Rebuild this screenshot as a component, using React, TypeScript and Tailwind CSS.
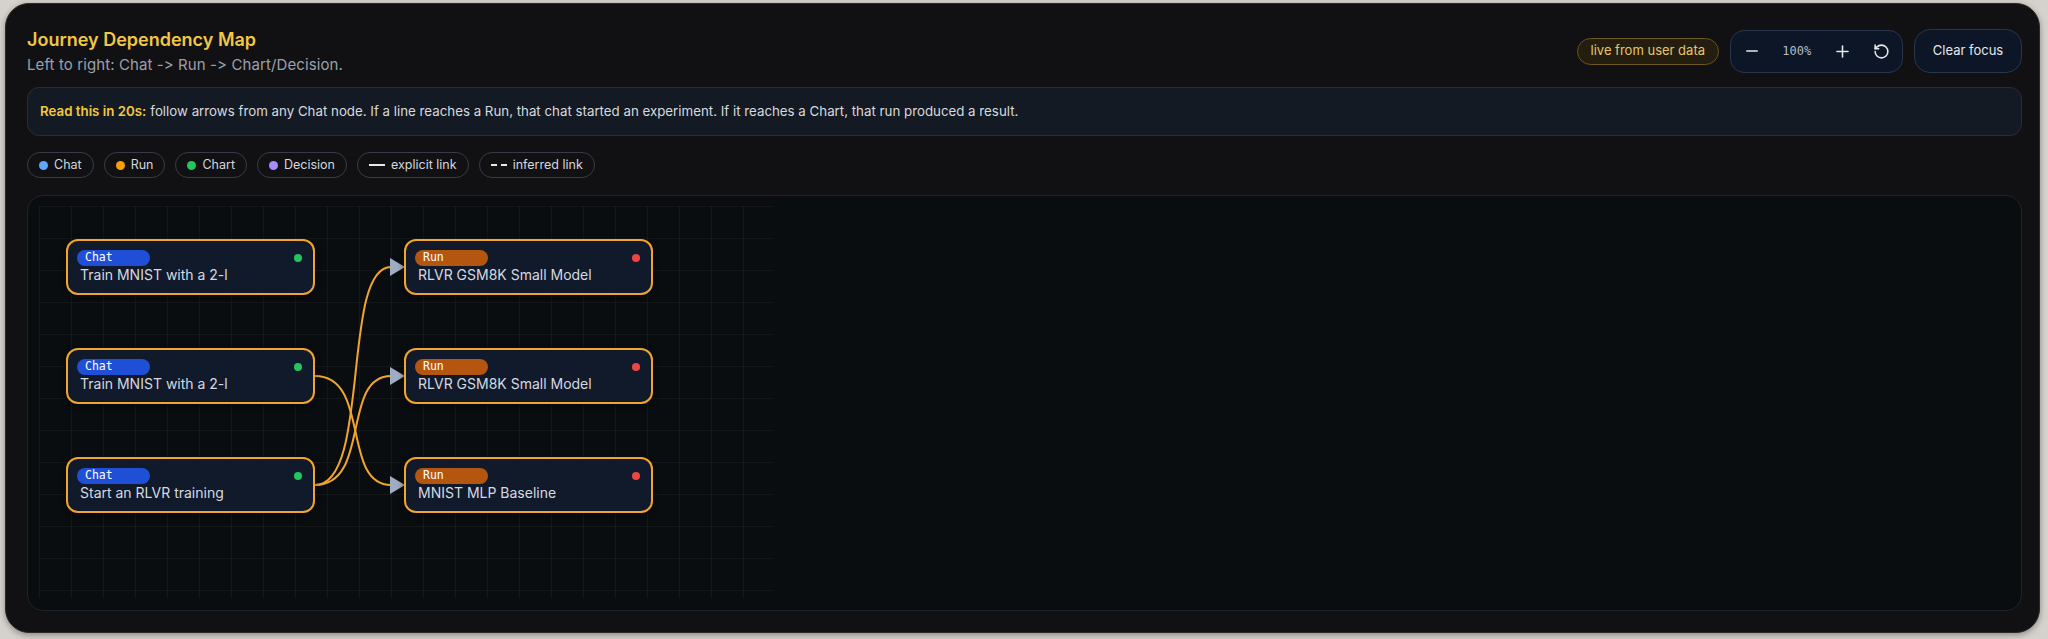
import React from 'react';
import { Minus, Plus, RotateCcw } from 'lucide-react';

const nodes = [
  { id: 'c1', kind: 'Chat', title: 'Train MNIST with a 2-l', x: 38, y: 43 },
  { id: 'c2', kind: 'Chat', title: 'Train MNIST with a 2-l', x: 38, y: 152 },
  { id: 'c3', kind: 'Chat', title: 'Start an RLVR training', x: 38, y: 261 },
  { id: 'r1', kind: 'Run', title: 'RLVR GSM8K Small Model', x: 376, y: 43 },
  { id: 'r2', kind: 'Run', title: 'RLVR GSM8K Small Model', x: 376, y: 152 },
  { id: 'r3', kind: 'Run', title: 'MNIST MLP Baseline', x: 376, y: 261 },
];

// source y -> target y, all from chat column right edge to run column left edge
const edges = [
  { from: 180, to: 289 },
  { from: 289, to: 71 },
  { from: 289, to: 180 },
];

const Legend = ({ children }: any) => (
  <div className="h-[26px] px-[11px] rounded-full border border-[#363b46] flex items-center gap-[6px] text-[12.5px] text-[#d4d7dd]">
    {children}
  </div>
);

const Node = ({ node }: any) => {
  const isChat = node.kind === 'Chat';
  return (
    <div
      className="absolute w-[249px] h-[56px] rounded-[12px] border-2 border-[#f2a52c] bg-[#111a2b] pt-[9px] pb-[9px] pl-[9px] pr-[9px] shadow-[0_2px_6px_rgba(0,0,0,0.5)]"
      style={{ left: node.x, top: node.y }}
    >
      <div className="flex items-center justify-between">
        <div
          className={
            'w-[73px] h-[16px] rounded-full pl-[8px] flex items-center text-[11.5px] text-white font-["DejaVu_Sans_Mono",monospace] ' +
            (isChat ? 'bg-[#1f4fd6]' : 'bg-[#b4560f]')
          }
        >
          {node.kind}
        </div>
        <div className={'w-[8px] h-[8px] rounded-full mr-[2px] ' + (isChat ? 'bg-[#22c55e]' : 'bg-[#ef4444]')} />
      </div>
      <div className="pl-[3px] text-[14px] leading-[18px] text-[#d5d9e0]">{node.title}</div>
    </div>
  );
};

export default function App() {
  return (
    <div className="h-[639px] bg-[#d5d2cd] pt-[3px] pl-[5px] font-['Inter',sans-serif] [font-feature-settings:'calt'_0,'liga'_0]">
      <div className="w-[2035px] h-[630px] rounded-[24px] bg-[#111114] border border-[#2e2a20] shadow-[0_2px_6px_rgba(0,0,0,0.35)] pt-[23px] pl-[21px] pr-[17px]">
        {/* header */}
        <div className="h-[48px] flex items-center justify-between">
          <div>
            <h1 className="text-[18px] leading-[24px] font-semibold text-[#f2c744]">Journey Dependency Map</h1>
            <p className="mt-[3px] text-[15px] leading-[20px] text-[#9aa0ab] tracking-[0.1px]">Left to right: Chat -&gt; Run -&gt; Chart/Decision.</p>
          </div>
          <div className="flex items-center gap-[11px]">
            <div className="h-[27px] px-[13px] rounded-full border border-[#6e5518] bg-[#231e10] flex items-center text-[13px] text-[#e8c46c]">
              live from user data
            </div>
            <div className="w-[173px] h-[43px] rounded-[14px] border border-[#28364b] bg-[#0d1626] flex items-center justify-between px-[12px] text-[#e5e7eb]">
              <Minus size={18} strokeWidth={2} />
              <span className="text-[12px] text-[#b6bcc6] font-['DejaVu_Sans_Mono',monospace]">100%</span>
              <Plus size={19} strokeWidth={2} />
              <RotateCcw size={17} strokeWidth={2.2} />
            </div>
            <button className="w-[108px] h-[44px] rounded-[16px] border border-[#28364b] bg-[#0d1626] text-[13px] text-[#e5e7eb]">
              Clear focus
            </button>
          </div>
        </div>

        {/* hint */}
        <div className="mt-[12px] h-[49px] rounded-[12px] border border-[#252e3d] bg-[#141a23] px-[12px] flex items-center text-[13.3px] text-[#d6d9df]">
          <span className="font-semibold text-[#f2c744] mr-[4px]">Read this in 20s:</span>
          follow arrows from any Chat node. If a line reaches a Run, that chat started an experiment. If it reaches a Chart, that run produced a result.
        </div>

        {/* legend */}
        <div className="mt-[16px] flex gap-[10px]">
          <Legend><span className="w-[9px] h-[9px] rounded-full bg-[#60a5fa]" />Chat</Legend>
          <Legend><span className="w-[9px] h-[9px] rounded-full bg-[#f59e0b]" />Run</Legend>
          <Legend><span className="w-[9px] h-[9px] rounded-full bg-[#22c55e]" />Chart</Legend>
          <Legend><span className="w-[9px] h-[9px] rounded-full bg-[#a78bfa]" />Decision</Legend>
          <Legend><span className="w-[16px] h-[2px] bg-[#e5e7eb]" />explicit link</Legend>
          <Legend><span className="w-[16px] border-t-2 border-dashed border-[#e5e7eb]" />inferred link</Legend>
        </div>

        {/* canvas */}
        <div className="relative mt-[17px] h-[416px] rounded-[16px] border border-[#1e232c] bg-[#0a0d10] overflow-hidden">
          <div className="absolute left-[11px] top-[10px] w-[735px] h-[392px] bg-[linear-gradient(to_right,rgba(255,255,255,0.04)_1px,transparent_1px),linear-gradient(to_bottom,rgba(255,255,255,0.04)_1px,transparent_1px)] bg-[size:32px_32px]" />
          <svg className="absolute left-0 top-0" width="800" height="416">
            {edges.map((e, i) => (
              <path
                key={i}
                d={`M287,${e.from} C343,${e.from} 313,${e.to} 363,${e.to}`}
                fill="none"
                stroke="#f2a52c"
                strokeWidth="2"
              />
            ))}
            {[71, 180, 289].map((y) => (
              <polygon key={y} points={`362,${y - 9} 377,${y} 362,${y + 9}`} fill="#9fadc2" />
            ))}
          </svg>
          {nodes.map((n) => (
            <Node key={n.id} node={n} />
          ))}
        </div>
      </div>
    </div>
  );
}
